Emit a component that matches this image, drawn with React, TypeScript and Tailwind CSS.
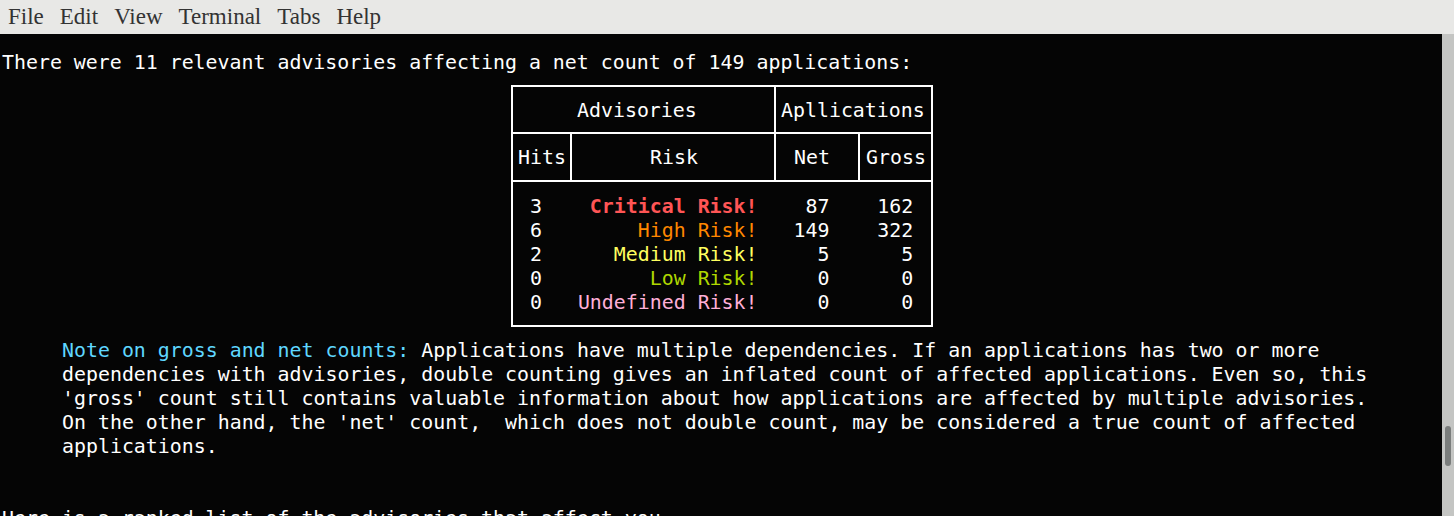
import React from 'react';

const MENU = ['File', 'Edit', 'View', 'Terminal', 'Tabs', 'Help'];

const ROWS = [
  { hits: '3', label: 'Critical Risk!', color: 'text-[#ff5555] font-bold', net: '87', gross: '162' },
  { hits: '6', label: 'High Risk!', color: 'text-[#ff8700]', net: '149', gross: '322' },
  { hits: '2', label: 'Medium Risk!', color: 'text-[#ffff5f]', net: '5', gross: '5' },
  { hits: '0', label: 'Low Risk!', color: 'text-[#afd700]', net: '0', gross: '0' },
  { hits: '0', label: 'Undefined Risk!', color: 'text-[#ffafd7]', net: '0', gross: '0' },
];

const NOTE = [
  'dependencies with advisories, double counting gives an inflated count of affected applications. Even so, this',
  "'gross' count still contains valuable information about how applications are affected by multiple advisories.",
  "On the other hand, the 'net' count,  which does not double count, may be considered a true count of affected",
  'applications.',
];

function AdvisoryTable() {
  return (
    <div className="h-[264px] pt-[10px] pl-[509px]">
      <div className="w-[422px] h-[242px] border-2 border-white flex flex-col">
        <div className="flex h-[47px] border-b-2 border-white">
          <div className="w-[263px] pl-[64px] pt-[12px] border-r-2 border-white">Advisories</div>
          <div className="flex-1 pl-[5px] pt-[12px]">Apllications</div>
        </div>
        <div className="flex h-[48px] border-b-2 border-white">
          <div className="w-[59px] pl-[5px] pt-[12px] border-r-2 border-white">Hits</div>
          <div className="w-[204px] pl-[78px] pt-[12px] border-r-2 border-white">Risk</div>
          <div className="w-[84px] pl-[18px] pt-[12px] border-r-2 border-white">Net</div>
          <div className="flex-1 pl-[6px] pt-[12px]">Gross</div>
        </div>
        <div className="pl-[5px] pt-[13px]">
          {ROWS.map((r, i) => (
            <div key={i} className="h-[24px] whitespace-pre">
              {(' ' + r.hits).padEnd(20 - r.label.length)}
              <span className={r.color}>{r.label}</span>
              {r.net.padStart(6)}
              {r.gross.padStart(7)}
            </div>
          ))}
        </div>
      </div>
    </div>
  );
}

export default function App() {
  return (
    <div className="w-[1454px] h-[516px] overflow-hidden flex flex-col bg-[#050505]">
      <div className="h-[34px] bg-[#e8e8e6] flex items-center text-[#333333] text-[23px] font-['Liberation_Serif',serif]">
        {MENU.map((m) => (
          <span key={m} className="px-[8px]">{m}</span>
        ))}
      </div>
      <div className="flex flex-1 min-h-0">
        <div className="flex-1 overflow-hidden pt-[17px] pl-[2px] text-white text-[19.9px] leading-[24px] font-['DejaVu_Sans_Mono',monospace]">
          <div className="h-[24px] whitespace-pre">There were 11 relevant advisories affecting a net count of 149 applications:</div>
          <AdvisoryTable />
          <div className="pl-[60px]">
            <div className="h-[24px] whitespace-pre">
              <span className="text-[#5fd7ff]">Note on gross and net counts:</span> Applications have multiple dependencies. If an applications has two or more
            </div>
            {NOTE.map((l, i) => (
              <div key={i} className="h-[24px] whitespace-pre">{l}</div>
            ))}
          </div>
          <div className="h-[48px]" />
          <div className="h-[24px] whitespace-pre">Here is a ranked list of the advisories that affect you.</div>
        </div>
        <div className="w-[12px] bg-[#c4c5c3] flex flex-col pt-[392px] items-center">
          <div className="w-[6px] h-[40px] rounded-full bg-[#7a7d7c]" />
        </div>
      </div>
    </div>
  );
}
